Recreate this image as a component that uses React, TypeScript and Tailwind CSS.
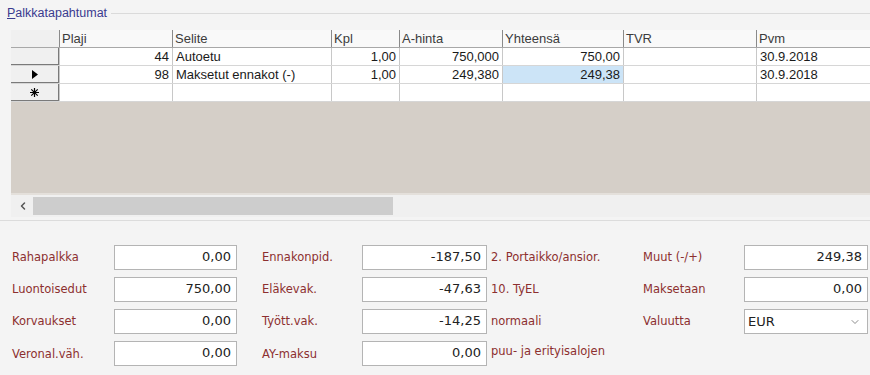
import { ChevronDown, ChevronLeft } from 'lucide-react'

type Row = {
  marker: 'none' | 'current' | 'new'
  plaji: string
  selite: string
  kpl: string
  hinta: string
  yhteensa: string
  tvr: string
  pvm: string
}

const rows: Row[] = [
  { marker: 'none', plaji: '44', selite: 'Autoetu', kpl: '1,00', hinta: '750,000', yhteensa: '750,00', tvr: '', pvm: '30.9.2018' },
  { marker: 'current', plaji: '98', selite: 'Maksetut ennakot (-)', kpl: '1,00', hinta: '249,380', yhteensa: '249,38', tvr: '', pvm: '30.9.2018' },
  { marker: 'new', plaji: '', selite: '', kpl: '', hinta: '', yhteensa: '', tvr: '', pvm: '' },
]

const grid = 'font-["Liberation_Sans",Arial,sans-serif] text-[13px]'

function HeadCell({ w, children }: { w: string; children?: React.ReactNode }) {
  return (
    <div className={`${w} h-full shrink-0 border-l border-[#8a8a8a] pl-[2px] leading-[18px] text-[#3c3c3c]`}>
      {children}
    </div>
  )
}

function Cell({ w, right, hl, children }: { w: string; right?: boolean; hl?: boolean; children?: React.ReactNode }) {
  return (
    <div
      className={`${w} h-full shrink-0 border-l border-[#c8c8c8] px-[3px] leading-[17px] text-[#1a1a1a] ${right ? 'text-right' : ''} ${hl ? 'bg-[#cce4f7]' : ''}`}
    >
      {children}
    </div>
  )
}

function Label({ w, children }: { w: string; children: React.ReactNode }) {
  return <div className={`${w} shrink-0 text-[11.5px] text-[#8c2f2f]`}>{children}</div>
}

function Box({ w, children }: { w: string; children: React.ReactNode }) {
  return (
    <div className={`${w} h-[25px] shrink-0 border border-[#b4b4b4] bg-white pr-[5px] text-right text-[13px] leading-[22px] text-[#222]`}>
      {children}
    </div>
  )
}

export default function App() {
  return (
    <div className='w-[870px] h-[375px] overflow-hidden bg-[#f4f4f4] font-["DejaVu_Sans",Tahoma,sans-serif]'>
      {/* group title */}
      <div className="flex h-[24px] items-center pl-[7px] pt-[2px]">
        <span className={`${grid} !text-[12.5px] text-[#3a3a8f]`}>
          <span className="underline">P</span>alkkatapahtumat
        </span>
        <div className="ml-[4px] h-[1px] flex-1 bg-[#dadada]" />
      </div>

      {/* data grid */}
      <div className={`ml-[11px] mt-[6px] ${grid}`}>
        <div className="flex h-[18px] border-b border-[#a8a8a8] bg-[#f9f9f9]">
          <div className="h-full w-[48px] shrink-0 bg-[#f0f0f0]" />
          <HeadCell w="w-[113px]">Plaji</HeadCell>
          <HeadCell w="w-[159px]">Selite</HeadCell>
          <HeadCell w="w-[68px]">Kpl</HeadCell>
          <HeadCell w="w-[103px]">A-hinta</HeadCell>
          <HeadCell w="w-[121px]">Yhteensä</HeadCell>
          <HeadCell w="w-[133px]">TVR</HeadCell>
          <HeadCell w="w-[120px]">Pvm</HeadCell>
        </div>
        {rows.map((r, i) => (
          <div key={i} className="flex h-[18px] border-b border-[#d6d6d6] bg-white">
            <div className="flex h-full w-[48px] shrink-0 items-center justify-center border-b border-r border-[#7a7a7a] bg-[#f0f0f0] text-[12px] text-black">
              {r.marker === 'current' && (
                <svg width="6" height="9" viewBox="0 0 6 9">
                  <path d="M0 0 L6 4.5 L0 9 Z" fill="#000" />
                </svg>
              )}
              {r.marker === 'new' && (
                <svg width="9" height="9" viewBox="0 0 9 9">
                  <path d="M4.5 0 V9 M0 4.5 H9 M1.3 1.3 L7.7 7.7 M7.7 1.3 L1.3 7.7" stroke="#000" strokeWidth="1.2" />
                </svg>
              )}
            </div>
            <Cell w="w-[113px]" right>{r.plaji}</Cell>
            <Cell w="w-[159px]">{r.selite}</Cell>
            <Cell w="w-[68px]" right>{r.kpl}</Cell>
            <Cell w="w-[103px]" right>{r.hinta}</Cell>
            <Cell w="w-[121px]" right hl={i === 1}>{r.yhteensa}</Cell>
            <Cell w="w-[133px]">{r.tvr}</Cell>
            <Cell w="w-[120px]">{r.pvm}</Cell>
          </div>
        ))}
        <div className="h-[93px] border-b-2 border-[#e4e0db] bg-[#d5cfc8]" />
        <div className="flex h-[22px] items-center bg-[#f0f0f0]">
          <ChevronLeft className="ml-[6px] h-[12px] w-[12px] text-[#555]" strokeWidth={3} />
          <div className="ml-[4px] h-[18px] w-[360px] bg-[#cdcdcd]" />
        </div>
      </div>
      <div className="mt-[3px] h-[1px] bg-[#dcdcdc]" />

      {/* summary form */}
      <div className="flex flex-col gap-[7px] pl-[12px] pt-[24px]">
        <div className="flex h-[25px] items-center">
          <Label w="w-[102px]">Rahapalkka</Label>
          <Box w="w-[123px]">0,00</Box>
          <div className="w-[25px] shrink-0" />
          <Label w="w-[100px]">Ennakonpid.</Label>
          <Box w="w-[125px]">-187,50</Box>
          <div className="w-[4px] shrink-0" />
          <Label w="w-[152px]">2. Portaikko/ansior.</Label>
          <Label w="w-[101px]">Muut (-/+)</Label>
          <Box w="w-[124px]">249,38</Box>
        </div>
        <div className="flex h-[25px] items-center">
          <Label w="w-[102px]">Luontoisedut</Label>
          <Box w="w-[123px]">750,00</Box>
          <div className="w-[25px] shrink-0" />
          <Label w="w-[100px]">Eläkevak.</Label>
          <Box w="w-[125px]">-47,63</Box>
          <div className="w-[4px] shrink-0" />
          <Label w="w-[152px]">10. TyEL</Label>
          <Label w="w-[101px]">Maksetaan</Label>
          <Box w="w-[124px]">0,00</Box>
        </div>
        <div className="flex h-[25px] items-center">
          <Label w="w-[102px]">Korvaukset</Label>
          <Box w="w-[123px]">0,00</Box>
          <div className="w-[25px] shrink-0" />
          <Label w="w-[100px]">Tyött.vak.</Label>
          <Box w="w-[125px]">-14,25</Box>
          <div className="w-[4px] shrink-0" />
          <Label w="w-[152px]">normaali</Label>
          <Label w="w-[101px]">Valuutta</Label>
          <div className="flex h-[25px] w-[124px] shrink-0 items-center justify-between border border-[#b4b4b4] bg-white pl-[3px] pr-[6px] text-[13px] text-[#222]">
            <span>EUR</span>
            <ChevronDown className="h-[12px] w-[12px] text-[#666]" strokeWidth={1.5} />
          </div>
        </div>
        <div className="flex h-[25px] items-center">
          <div className="w-[102px] shrink-0 pt-[3px] text-[11.5px] text-[#8c2f2f]">Veronal.väh.</div>
          <Box w="w-[123px]">0,00</Box>
          <div className="w-[25px] shrink-0" />
          <div className="w-[100px] shrink-0 pt-[3px] text-[11.5px] text-[#8c2f2f]">AY-maksu</div>
          <Box w="w-[125px]">0,00</Box>
          <div className="w-[4px] shrink-0" />
          <div className="w-[152px] shrink-0 pb-[4px] text-[11.5px] text-[#8c2f2f]">puu- ja erityisalojen</div>
        </div>
      </div>
    </div>
  )
}
